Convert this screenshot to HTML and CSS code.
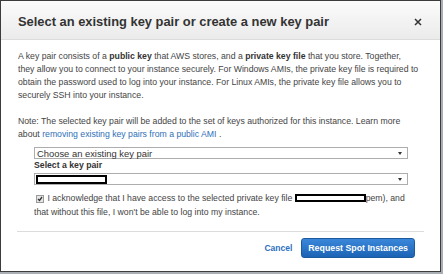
FILE: index.html
```html
<!DOCTYPE html>
<html lang="en">
<head>
  <meta charset="UTF-8" />
  <title>Key pair</title>
  <link rel="stylesheet" href="styles.css">
</head>
<body>

  <div class="modal">
    <div class="modal-header">
      <h2>Select an existing key pair or create a new key pair</h2>
      <svg class="close" width="8" height="8" viewBox="0 0 8 8"><path d="M1 1L7 7M7 1L1 7" stroke="#333" stroke-width="1.5"/></svg>
    </div>

    <div class="modal-body">
      <p>A key pair consists of a <b>public key</b> that AWS stores, and a <b>private key file</b> that you store. Together,<br>
        they allow you to connect to your instance securely. For Windows AMIs, the private key file is required to<br>
        obtain the password used to log into your instance. For Linux AMIs, the private key file allows you to<br>
        securely SSH into your instance.</p>

      <p>Note: The selected key pair will be added to the set of keys authorized for this instance. Learn more<br>
        about <a href="#">removing existing key pairs from a public AMI</a> .</p>

      <div class="key-form">
        <div class="fake-select">
          <span>Choose an existing key pair</span>
          <svg class="arrow" width="4" height="3" viewBox="0 0 4 3"><path d="M0 0H4L2 3Z" fill="#333"/></svg>
        </div>
        <div class="label">Select a key pair</div>
        <div class="fake-select">
          <span class="redact redact-select"></span>
          <svg class="arrow" width="4" height="3" viewBox="0 0 4 3"><path d="M0 0H4L2 3Z" fill="#333"/></svg>
        </div>
        <p class="ack">
          <span class="check"><svg width="6" height="6" viewBox="0 0 6 6"><path d="M1 3L2.5 4.5L5 1" stroke="#333" stroke-width="1.3" fill="none"/></svg></span>
          I acknowledge that I have access to the selected private key file <span class="redact redact-inline"></span>pem), and<br>
          that without this file, I won't be able to log into my instance.
        </p>
      </div>
    </div>

    <div class="modal-footer">
      <a href="#" class="cancel">Cancel</a>
      <button class="btn">Request Spot Instances</button>
    </div>
  </div>

</body>
</html>
```

FILE: styles.css
```css
body {
  margin: 0;
  background-color: #a9aeb4;
  font-family: "Liberation Sans", Arial, sans-serif;
  height: 274px;
  overflow: hidden;
}

.modal {
  width: 439px;
  height: 270px;
  background-color: white;
  border: 1px solid #3c3c3c;
  display: flex;
  flex-direction: column;
}

.modal-header {
  height: 38px;
  display: flex;
  align-items: center;
  justify-content: space-between;
  padding: 0 18px 0 17px;
  background: linear-gradient(#fbfbfb, #ebebeb);
  border-bottom: 1px solid #dcdcdc;
}

.modal-header h2 {
  margin: 2px 0 0 0;
  font-size: 12.9px;
  font-weight: bold;
  color: #333;
}

.close {
  margin-top: 4px;
}

.modal-body {
  padding: 10px 16px 0 17px;
  font-size: 8.7px;
  line-height: 13px;
  color: #444;
  white-space: nowrap;
}

.modal-body p {
  margin: 0 0 13px 0;
}

.modal-body b {
  color: #333;
}

.modal-body a {
  color: #2f6fb8;
  text-decoration: none;
}

.key-form {
  margin: -7px 16px 0 16px;
}

.fake-select {
  height: 10px;
  border: 1px solid #adadad;
  display: flex;
  align-items: center;
  justify-content: space-between;
  padding: 0 5px 0 2px;
  color: #333;
  font-size: 9.4px;
}

.label {
  font-weight: bold;
  color: #333;
  line-height: 13px;
  margin-bottom: 1px;
}

.redact {
  display: inline-block;
  border: 2px solid black;
  background-color: white;
  box-sizing: border-box;
}

.redact-select {
  width: 71px;
  height: 9px;
  margin-left: -1px;
}

.redact-inline {
  width: 71px;
  height: 8px;
  vertical-align: -1px;
}

.modal-body p.ack {
  margin: 7px 0 0 0;
  line-height: 13.5px;
  color: #444;
}

.check {
  display: inline-flex;
  align-items: center;
  justify-content: center;
  width: 6px;
  height: 6px;
  margin-left: 2px;
  margin-right: 1px;
  background-color: #e6e6e6;
  border: 1px solid #9a9a9a;
  vertical-align: -1px;
}

.modal-footer {
  margin: 12px 16px 0 16px;
  padding: 6px 9px 0 0;
  border-top: 1px solid #dcdcdc;
  display: flex;
  justify-content: flex-end;
  align-items: center;
  gap: 9px;
}

.cancel {
  color: #2d6fc0;
  font-weight: bold;
  font-size: 8.5px;
  text-decoration: none;
}

.btn {
  height: 20px;
  padding: 0 6px;
  font-family: "Liberation Sans", Arial, sans-serif;
  font-size: 8.8px;
  font-weight: bold;
  color: white;
  background: linear-gradient(#3a87da, #1c63b5);
  border: 1px solid #1c5a9f;
  border-radius: 3px;
}
```
